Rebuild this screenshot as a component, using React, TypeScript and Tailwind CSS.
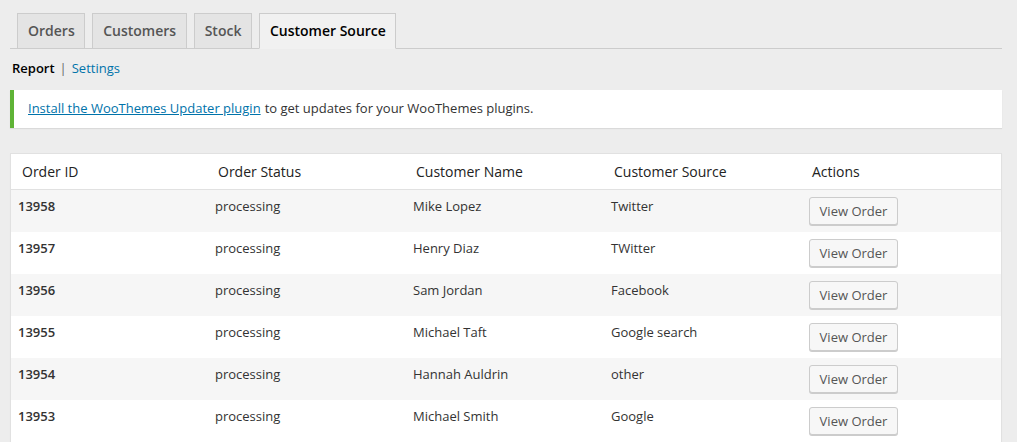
import React from "react";

type Row = { id: string; status: string; name: string; source: string };

const rows: Row[] = [
  { id: "13958", status: "processing", name: "Mike Lopez", source: "Twitter" },
  { id: "13957", status: "processing", name: "Henry Diaz", source: "TWitter" },
  { id: "13956", status: "processing", name: "Sam Jordan", source: "Facebook" },
  { id: "13955", status: "processing", name: "Michael Taft", source: "Google search" },
  { id: "13954", status: "processing", name: "Hannah Auldrin", source: "other" },
  { id: "13953", status: "processing", name: "Michael Smith", source: "Google" },
];

const tabs = ["Orders", "Customers", "Stock", "Customer Source"];
const columns = ["Order ID", "Order Status", "Customer Name", "Customer Source", "Actions"];

export default function App() {
  return (
    <div
      className="h-[442px] w-full overflow-hidden bg-[#ededed] pl-[10px] pr-[15px] text-[#444]"
      style={{ fontFamily: '"Open Sans", "Noto Sans", sans-serif' }}
    >
      {/* report tabs */}
      <nav className="flex h-[49px] items-end border-b border-[#ccc] pt-[13px]">
        {tabs.map((tab, i) => {
          const active = i === tabs.length - 1;
          return (
            <span
              key={tab}
              className={`-mb-px ml-[7px] border border-[#ccc] pl-[10px] pr-[9.5px] pb-[5px] pt-[5px] text-[14px] font-semibold leading-[24px] ${
                active ? "border-b-[#f1f1f1] bg-[#f1f1f1] text-black" : "bg-[#e4e4e4] text-[#555]"
              }`}
            >
              {tab}
            </span>
          );
        })}
      </nav>

      <div className="mt-[10px] flex items-center gap-[5px] pl-[2px] text-[13px] leading-[18px]">
        <span className="font-semibold text-black">Report</span>
        <span className="text-[#666]">|</span>
        <a href="#" className="text-[#0073aa]">Settings</a>
      </div>

      {/* updater notice */}
      <div className="mt-[13px] flex h-[38px] items-center border-l-4 border-[#5fb336] bg-white pl-[14px] text-[13px] shadow-[0_1px_1px_rgba(0,0,0,0.08)]">
        <a href="#" className="text-[#0073aa] underline">Install the WooThemes Updater plugin</a>
        <span className="ml-[4px] text-[#333]">to get updates for your WooThemes plugins.</span>
      </div>

      {/* orders table */}
      <div className="mt-[25px] w-[992px] border border-[#e1e1e1] bg-white shadow-[0_1px_1px_rgba(0,0,0,0.04)]">
        <div className="grid h-[36px] grid-cols-5 items-center border-b border-[#e1e1e1] text-[14px] text-[#222]">
          {columns.map((c, i) => (
            <div key={c} className={i === 0 ? "pl-[11px]" : "pl-[9px]"}>
              {c}
            </div>
          ))}
        </div>
        {rows.map((r, i) => (
          <div
            key={r.id}
            className={`grid h-[42px] grid-cols-5 text-[13px] leading-[19px] text-[#333] ${
              i % 2 === 0 ? "bg-[#f6f6f6]" : "bg-white"
            }`}
          >
            <div className="pl-[7px] pt-[7px] font-semibold text-[#333]">{r.id}</div>
            <div className="pl-[6px] pt-[7px]">{r.status}</div>
            <div className="pl-[6px] pt-[7px]">{r.name}</div>
            <div className="pl-[6px] pt-[7px]">{r.source}</div>
            <div className="pl-[6px] pt-[7px]">
              <button className="h-[28px] w-[89px] rounded-[3px] border border-[#ccc] bg-[#f7f7f7] text-[13px] text-[#555] shadow-[0_1px_0_#ccc]">
                View Order
              </button>
            </div>
          </div>
        ))}
      </div>
    </div>
  );
}
